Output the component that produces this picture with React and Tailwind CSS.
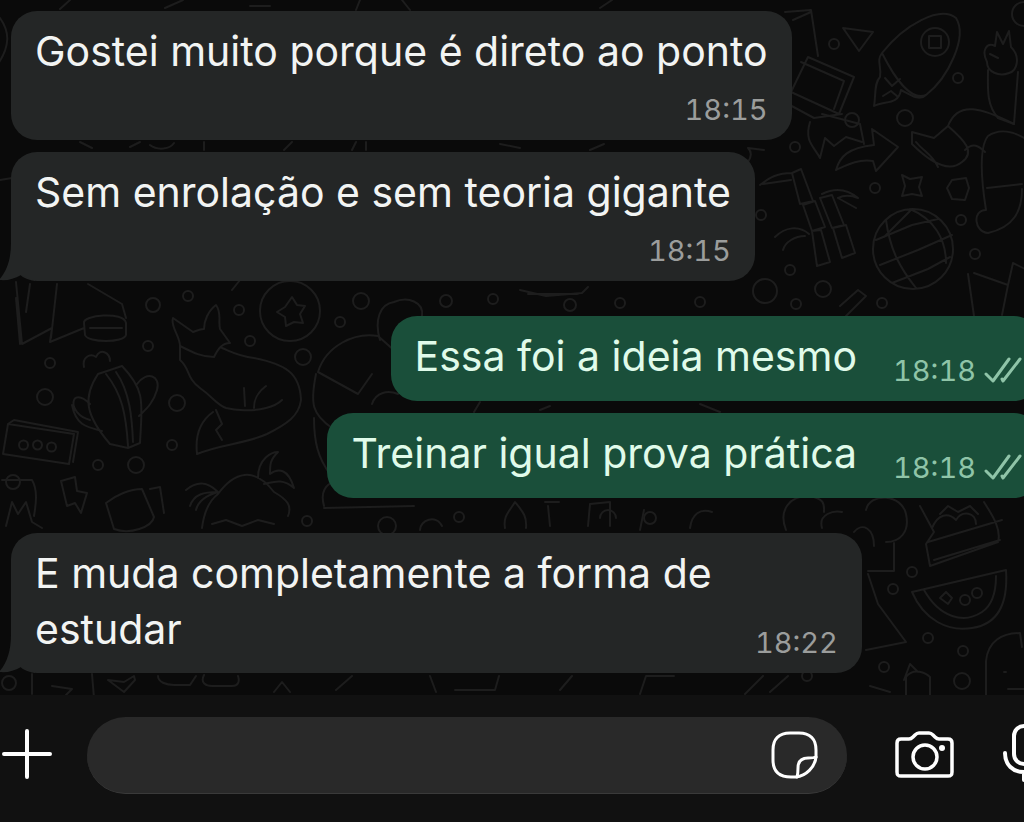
import { useState } from 'react'

const messages = [
  { id: 1, side: 'in', text: 'Gostei muito porque é direto ao ponto', time: '18:15', layout: 'stacked' },
  { id: 2, side: 'in', text: 'Sem enrolação e sem teoria gigante', time: '18:15', layout: 'stacked', tail: true },
  { id: 3, side: 'out', text: 'Essa foi a ideia mesmo', time: '18:18' },
  { id: 4, side: 'out', text: 'Treinar igual prova prática', time: '18:18' },
  { id: 5, side: 'in', text: 'E muda completamente a forma de estudar', time: '18:22', layout: 'inline', tail: true },
]

// small circles scattered over the wallpaper: x, y, radius
const dots = [
  [834, 44, 5], [958, 78, 5], [905, 118, 8], [852, 120, 7], [795, 147, 5], [875, 188, 5], [761, 215, 5],
  [961, 220, 5], [975, 254, 5], [790, 270, 5], [823, 289, 8], [882, 303, 5], [796, 304, 5], [153, 305, 7],
  [188, 296, 5], [239, 310, 5], [148, 346, 5], [50, 363, 5], [45, 397, 8], [177, 403, 8], [172, 445, 5],
  [98, 465, 5], [136, 465, 8], [250, 341, 5], [303, 357, 8], [361, 301, 8], [340, 322, 5], [446, 301, 6],
  [493, 299, 5], [387, 526, 9], [459, 517, 5], [307, 521, 5], [912, 572, 5], [893, 589, 5], [928, 638, 5],
  [963, 651, 5], [962, 681, 8], [884, 667, 5], [9, 683, 7], [1024, 14, 12], [13, 482, 7], [765, 291, 12],
  [807, 676, 5], [620, 303, 5], [570, 305, 6], [700, 302, 5], [650, 518, 6],
]

const doodles = [
  // picture frame and triangle
  'M785 12l26-2 7 46M793 20l18-8M808 57l46 20-15 37-48-22zM801 62l43 19-10 28M791 92l-3 12 26 14 28-4M843 28l30 4-14 19z',
  // rocket
  'M882 53c22-28 58-48 74-35 12 19-8 60-30 77-14 6-30-14-44-42zM882 53c-6 8 0 14-2 24-6 6-4 18-6 29 10-6 24 0 27-16 8 4 18 12 25 5M885 78l7 8 8-7M883 96l8-5 7 6',
  'M921 42a14 14 0 1 0 28 0a14 14 0 1 0-28 0M929 36h12v12h-12z',
  // waving hand
  'M987 62c-6-12 0-20 8-16l2-14 6 12 6-13 2 16c10 10 6 24-2 26-10 4-22-1-22-11zM988 70c0 18-2 34 10 48l16 6 4-52M990 54l8 4',
  // arrow, crown
  'M836 170c4-14 12-22 38-25l-2-16 26 18-22 24-3-10c-16-2-26 4-37 9zM810 122c-6 20 4 24 10 36l5-20 9 8 12-9 16 5M822 114l38 10 4 20',
  // glove
  'M912 132l22 6 14-12c16 14 28 26 14 36-12 10-30 2-50-18zM916 142c8 10 16 12 22 25M948 126c10-26 34-18 66-2M965 150c8-8 14-4 20 2',
  // candy cane sock
  'M986 210c-6-38-6-64 2-74 12-8 26-4 36 2M987 188l35-4M986 210c-14 0-12 22 2 23 26-6 34-22 34-44',
  // bamboo
  'M792 173l9-4 12 32-13 3zM803 205l9 26 13-4-10-26zM812 231l5 35 13-4-9-32zM820 198l12-3 12 30-12 3zM833 228l9 30 13-5-9-28zM760 185c10-8 18-12 32-12M763 184l28-4M822 194c12-6 24-6 36 4-10-4-16-2-20 0l18 10M775 237c10-10 24-12 34-3M783 250c2-8 12-14 22-14',
  // sparkle and gem
  'M902 175l8 4 12-2-3 10 3 9-10-2-10 2 3-10zM952 180l14-2 3 10-4 12-13-1-5-11zM748 148l16 2M748 162c4-6 4-10 0-14',
  // globe
  'M873 249a40 40 0 1 0 80 0a40 40 0 1 0-80 0M876 240l36-15 26-6M880 265l38-15 34-15M892 283l36-14 22-12M910 209c24 10 36 30 36 54M886 220c4 30 14 48 30 68M912 209l-28 28',
  // pennant
  'M968 274l6 42M974 273l34 12-6 30M1008 285l5-22 12 6M840 306l18-16 8 6-20 20',
  // tall cup and megaphone
  'M16 282l6 62 30-16-2 14 34-14M57 284l-6 54M20 344l-4-46M88 284l34 20 4 14M84 323c-2-8 40-12 42 0v12c-2 8-38 8-41 0zM90 328h32',
  // cactus
  'M98 374c-16 24-12 42 12 70l18 4 12-5c2-40 6-52-18-77M98 374l24-8M106 374c16 20 20 40 22 72M116 372c14 20 16 46 17 70M90 420c-24-6-20-36 0-16M72 405c4 20 14 22 30 26M137 384c10-14 24-8 20 6s-12 20-18 26M84 367c-2-10 6-14 12-10 4-10 14-4 14 4',
  // radio
  'M8 424l66 10-5 30-66-10zM8 424l6-4 64 12-5 30M19 445a4 4 0 1 0 9 0a4 4 0 1 0-9 0M33 445a4 4 0 1 0 9 0a4 4 0 1 0-9 0M47 447a4 4 0 1 0 9 0a4 4 0 1 0-9 0',
  // fox
  'M180 346c0-10-10-20-7-28l20 14c5-2 8-3 11-3 0-8 4-18 12-24 6 8 2 16 4 24l10 14c-8 0-12 6-16 14-12 0-20-4-34-11zM180 346v14c10 8 6 18 20 28s16 16 26 20c8 2 26 4 40 0 8-2 12-4 16-8M222 348c10 4 16 8 32 10 30 6 46 14 47 42-2 16-14 24-34 34-22 10-46 10-70 20-2-18 2-32 16-42M216 410l6 14-6 6 6 10M244 388l1 18M254 408c0-10 4-16 12-22',
  // badge with star
  'M260 311a30 30 0 1 0 60 0a30 30 0 1 0-60 0M292 297l5 8 8 1-5 8 3 9-9-1-8 4-1-9-8-5 8-5z',
  // umbrella
  'M318 372c8-26 36-40 60-36l18 16M318 372l40 22 14-20M316 374c-6 30-4 40 16 54M314 418c0 24 4 40 16 56M380 340c-6-20 0-36 14-38 14-6 30 0 28 14M372 404c4-12 16-14 26-10',
  // bolt, mug, flower pot
  'M61 481l14-4 2 14 10 2-6 20-6-10-8 3zM106 503c10-8 24-14 36-14l12 28c-2 10-24 18-40 12zM150 489l10-2 4 26M2 480h30c6 10 4 24 2 36M6 526l6-24 6 12 8-12 6 20 10 6',
  // palm island
  'M202 528c2-16 8-28 16-34 16-22 36-28 56-2 14 8 18 14 14 24M186 490c12-10 22-8 32 2M190 506c4-12 14-14 28-14-14 4-20 10-22 18M258 478c0-20 14-26 20-26-8 8-8 12-8 22 8-6 18-6 24 14-12-10-20-6-30-4M212 524l14-4 16 6 16-6 16 4',
  // slivers showing between bubbles
  'M0 18c10 14 10 28-2 46M60 9l10-9M165 8l18-8M250 6h20M356 10l4-10M402 0l8 10M600 8l12-8M0 180l12-2M80 142l12 6M130 147l10-5M150 145c8 6 20 4 24-2M204 142v8M284 150l8-8M352 150l4-8M366 142v8M500 144l20 4M590 150l14-6M30 284l-4 28M232 290l8-10M520 290l26 6 36-3 6-6M528 294h50M480 402l-6 10M540 410l10-4M700 404l20 8',
  'M505 528c-2-12 4-16 10-26 8 10 12 14 11 26M545 502h14M548 506l2 20M588 526l2-22 20-2v24M600 518a8 8 0 1 1 16 0M640 530l4-20M690 528c2-14 10-20 22-16M324 506c-4-14 2-22 10-24M324 508l90-2M420 530c0-10 16-16 22-4',
  // cloud tree
  'M786 530c-8-20 4-34 22-34 18 2 16 10 16 16M822 528c-4-14 12-18 20-16M866 510c4-18 36-16 40 4 4 18-6 28-20 28M854 532c8-10 20-4 20 14M894 543v28h-26M868 574l10 30 28 38-40 8',
  // cupcake
  'M920 506l14 26-8 12 4 22 68-24c4-14-8-30-14-40M928 542l74-22M932 528c6-14 16-16 24-8 6-10 20-8 20 4M940 514l8-8 10 6 12-6 8 8M934 560l66-20',
  // melon slice
  'M912 592l94-22c2 30-6 54-34 58-24 4-48-8-60-36zM924 590c16 28 40 34 58 22 12-8 14-24 14-36M940 598l6-6 6 6-4 6zM960 600a5 5 0 1 0 10 0a5 5 0 1 0-10 0M972 593a5 5 0 1 0 10 0a5 5 0 1 0-10 0',
  // ghost
  'M986 695v-34c2-20 16-28 34-28l2 14M1004 672h2M1008 689h16M906 695v-18c8-10 20-4 24 0v18M904 680l6-16 8 8M870 686l20 6',
  'M32 674v20M52 686l20 3-6 6M92 674l2 24M108 680l16 2 10-6 1 4-11 12zM158 676c0 6 8 9 16 9h16l6-9M204 675c-4 8 2 11 8 11h20c6 0 8-4 6-10M274 692l8-10 8 10M336 690l16-14M430 676l6 16M455 690h40l4-14M560 690l12-14M640 694l6-18h28M745 694l18-18M770 692l18-16',
]

function Wallpaper() {
  return (
    <svg
      className="absolute inset-0 h-full w-full"
      viewBox="0 0 1024 695"
      preserveAspectRatio="xMidYMid slice"
      fill="none"
      stroke="#1d1d1d"
      strokeWidth="2"
      strokeLinecap="round"
      strokeLinejoin="round"
      aria-hidden="true"
    >
      {doodles.map((d) => <path key={d} d={d} />)}
      {dots.map(([x, y, r]) => <circle key={`${x}-${y}`} cx={x} cy={y} r={r} />)}
    </svg>
  )
}

function Ticks() {
  return (
    <svg className="h-7 w-10" viewBox="0 0 40 28" fill="none" stroke="currentColor" strokeWidth="3" strokeLinecap="round" strokeLinejoin="round" aria-hidden="true">
      <path d="M2 17l7 7L25 2M18 22l1 2L36 2" />
    </svg>
  )
}

function Tail() {
  return (
    <svg className="absolute bottom-0 -left-3 h-12 w-9 text-[#242626]" viewBox="0 0 36 48" fill="currentColor" aria-hidden="true">
      <path d="M12 0v10c0 16-4 28-12 37 8 1 15-1 22-5l14 6V0z" />
    </svg>
  )
}

function Bubble({ message }) {
  const { side, text, time, layout, tail } = message

  if (side === 'out') {
    return (
      <div className="relative -mr-4 flex w-fit items-end gap-9 self-end rounded-[26px] bg-[#1a4f3a] pt-3 pr-4 pb-4 pl-6 text-[#e0fbea]">
        <p className="text-[41px] leading-[57px]">{text}</p>
        <div className="flex items-center gap-2 text-[#8fc4a8]">
          <time className="text-[29px] leading-7 tabular-nums">{time}</time>
          <Ticks />
        </div>
      </div>
    )
  }

  if (layout === 'inline') {
    return (
      <div className="relative flex max-w-[84%] items-end gap-6 self-start rounded-[26px] bg-[#242626] pt-3 pr-6 pb-4 pl-6 text-[#f2f4f3]">
        {tail && <Tail />}
        <p className="relative flex-1 text-[41px] leading-[56px]">{text}</p>
        <time className="text-[29px] leading-7 text-[#9b9d9c] tabular-nums">{time}</time>
      </div>
    )
  }

  return (
    <div className="relative w-fit self-start rounded-[26px] bg-[#242626] pt-3 pr-6 pb-4 pl-6 text-[#f2f4f3]">
      {tail && <Tail />}
      <p className="relative text-[41px] leading-[57px]">{text}</p>
      <time className="mt-4 block text-right text-[29px] leading-7 text-[#9b9d9c] tabular-nums">{time}</time>
    </div>
  )
}

function StickerIcon() {
  return (
    <svg className="h-12 w-12" viewBox="0 0 48 48" fill="none" stroke="currentColor" strokeWidth="3" strokeLinecap="round" strokeLinejoin="round" aria-hidden="true">
      <path d="M26 46h-5C9 46 3 40 3 29V19C3 8 9 2 20 2h9c11 0 17 6 17 17v7C45 36 36 45 26 46z" />
      <path d="M27 46c1-3 1-5 1-9 0-7 4-10 10-10 4 0 6 0 8-1" />
    </svg>
  )
}

function CameraIcon() {
  return (
    <svg className="h-12 w-[60px]" viewBox="0 0 60 48" fill="none" stroke="currentColor" strokeWidth="3.5" strokeLinejoin="round" aria-hidden="true">
      <path d="M7 8h8c2 0 3-1 4-2l2-2c1-1 2-2 4-2h10c2 0 3 1 4 2l2 2c1 1 2 2 4 2h9c3 0 4 2 4 4v29c0 3-1 4-4 4H7c-3 0-4-1-4-4V12c0-2 1-4 4-4z" />
      <circle cx="31" cy="26" r="12" />
      <circle cx="48" cy="17" r="3" fill="currentColor" stroke="none" />
    </svg>
  )
}

function MicIcon() {
  return (
    <svg className="h-[60px] w-[42px]" viewBox="0 0 42 60" fill="none" stroke="currentColor" strokeWidth="4" strokeLinecap="round" aria-hidden="true">
      <rect x="12" y="2" width="20" height="38" rx="10" />
      <path d="M3 29c0 12 8 19 19 19s19-7 19-19M22 48v8" />
    </svg>
  )
}

export default function App() {
  const [draft, setDraft] = useState('')

  return (
    <div className="flex min-h-screen flex-col overflow-hidden bg-[#0a0a0a] font-['Inter',sans-serif]">
      <main className="relative flex flex-col overflow-hidden pt-[11px] pb-[22px] pl-[11px]">
        <Wallpaper />
        <div className="relative flex flex-col gap-3">
          <Bubble message={messages[0]} />
          <Bubble message={messages[1]} />
        </div>
        <div className="relative mt-[35px] flex flex-col gap-3">
          <Bubble message={messages[2]} />
          <Bubble message={messages[3]} />
        </div>
        <div className="relative mt-[35px] flex flex-col">
          <Bubble message={messages[4]} />
        </div>
      </main>

      <form
        className="flex flex-1 items-start overflow-hidden bg-[#111111] pt-[22px] pb-7 text-white"
        onSubmit={(e) => e.preventDefault()}
      >
        <button type="button" aria-label="Anexar" className="mt-[10px] shrink-0">
          <svg className="h-[54px] w-[54px]" viewBox="0 0 54 54" stroke="currentColor" strokeWidth="4" strokeLinecap="round" aria-hidden="true">
            <path d="M4 27h46M27 4v46" />
          </svg>
        </button>
        <div className="ml-[33px] flex h-[77px] min-w-0 flex-1 items-center rounded-full border-b border-[#3a3a3a] bg-[#292929] pr-[29px] pl-8">
          <input
            type="text"
            aria-label="Mensagem"
            value={draft}
            onChange={(e) => setDraft(e.target.value)}
            className="min-w-0 flex-1 bg-transparent text-[41px] outline-none"
          />
          <button type="button" aria-label="Figurinhas" className="shrink-0">
            <StickerIcon />
          </button>
        </div>
        <button type="button" aria-label="Câmera" className="mt-[14px] ml-[47px] shrink-0">
          <CameraIcon />
        </button>
        <button type="button" aria-label="Gravar áudio" className="-mr-5 mt-[7px] ml-12 shrink-0">
          <MicIcon />
        </button>
      </form>
    </div>
  )
}
